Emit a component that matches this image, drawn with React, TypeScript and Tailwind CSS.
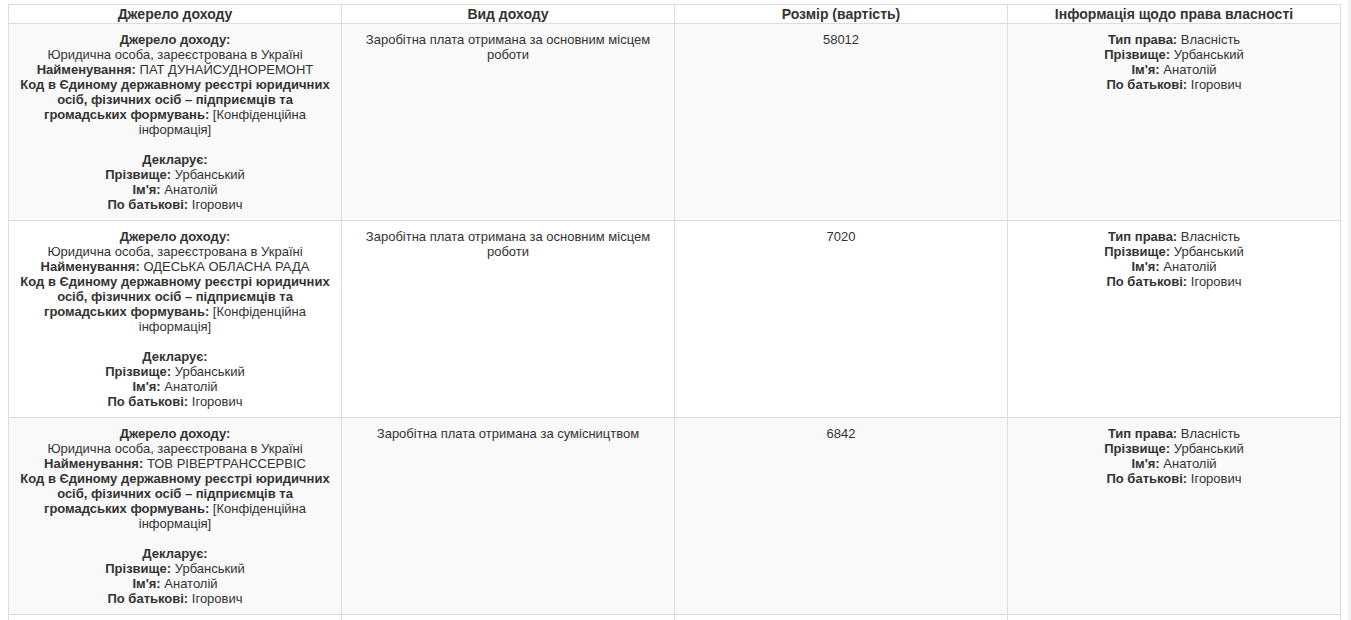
import React from "react";

type Row = {
  name: string;
  kind: string;
  amount: string;
  bg: string;
};

const rows: Row[] = [
  { name: "ПАТ ДУНАЙСУДНОРЕМОНТ", kind: "Заробітна плата отримана за основним місцем роботи", amount: "58012", bg: "bg-[#f9f9f9]" },
  { name: "ОДЕСЬКА ОБЛАСНА РАДА", kind: "Заробітна плата отримана за основним місцем роботи", amount: "7020", bg: "bg-white" },
  { name: "ТОВ РІВЕРТРАНССЕРВІС", kind: "Заробітна плата отримана за сумісництвом", amount: "6842", bg: "bg-[#f9f9f9]" },
  { name: "ТОВ РІВЕРТРАНССЕРВІС", kind: "Заробітна плата отримана за сумісництвом", amount: "1200", bg: "bg-white" },
];

function L({ label, value }: { label: string; value: string }) {
  return (
    <>
      <b className="font-bold">{label}</b> {value}
      <br />
    </>
  );
}

const td = "border border-[#dddddd] align-top px-[8px] pt-[8px] pb-[8px] text-[13px] leading-[15px]";

export default function App() {
  return (
    <div className="flex w-[1351px] h-[620px] overflow-hidden bg-white text-[#333]" style={{ fontFamily: '"Liberation Sans", Arial, sans-serif' }}>
      <div className="w-[1348px] pt-[4px] pl-[8px]">
        <table className="w-[1332px] table-fixed border-collapse text-center">
          <colgroup>
            <col className="w-[333px]" />
            <col className="w-[333px]" />
            <col className="w-[333px]" />
            <col className="w-[333px]" />
          </colgroup>
          <thead>
            <tr className="bg-white">
              {["Джерело доходу", "Вид доходу", "Розмір (вартість)", "Інформація щодо права власності"].map((h) => (
                <th key={h} className="border border-[#dddddd] px-[8px] py-0 h-[19px] text-[14px] leading-[17px] font-bold text-[#333]">
                  {h}
                </th>
              ))}
            </tr>
          </thead>
          <tbody>
            {rows.map((r, i) => (
              <tr key={i} className={r.bg}>
                <td className={`${td} h-[197px]`}>
                  <b className="font-bold">Джерело доходу:</b>
                  <br />
                  Юридична особа, зареєстрована в Україні
                  <br />
                  <L label="Найменування:" value={r.name} />
                  <b className="font-bold">Код в Єдиному державному реєстрі юридичних осіб, фізичних осіб – підприємців та громадських формувань:</b> [Конфіденційна інформація]
                  <br />
                  <br />
                  <b className="font-bold">Декларує:</b>
                  <br />
                  <L label="Прізвище:" value="Урбанський" />
                  <L label="Ім'я:" value="Анатолій" />
                  <b className="font-bold">По батькові:</b> Ігорович
                </td>
                <td className={td}>{r.kind}</td>
                <td className={td}>{r.amount}</td>
                <td className={td}>
                  <L label="Тип права:" value="Власність" />
                  <L label="Прізвище:" value="Урбанський" />
                  <L label="Ім'я:" value="Анатолій" />
                  <b className="font-bold">По батькові:</b> Ігорович
                </td>
              </tr>
            ))}
          </tbody>
        </table>
      </div>
      <div className="w-[3px] h-full bg-[#f1f1f1]" />
    </div>
  );
}
